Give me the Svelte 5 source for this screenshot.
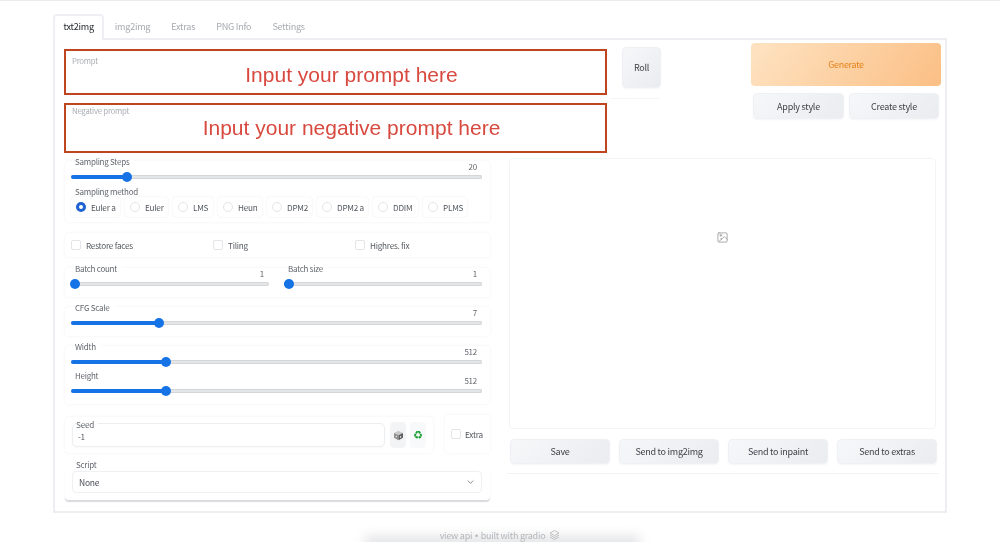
<script>
  const tabs = ['txt2img', 'img2img', 'Extras', 'PNG Info', 'Settings'];
  const methods = [
    ['Euler a', 49], ['Euler', 43], ['LMS', 40], ['Heun', 44],
    ['DPM2', 45], ['DPM2 a', 51], ['DDIM', 45], ['PLMS', 44]
  ];
  const checks = ['Restore faces', 'Tiling', 'Highres. fix'];
  const outputs = ['Save', 'Send to img2img', 'Send to inpaint', 'Send to extras'];
</script>

{#snippet slider(label, value, pct)}
  <div class="slider">
    <div class="slider-head">
      <span class="slider-label">{label}</span>
      <span class="slider-value">{value}</span>
    </div>
    <div class="track">
      <div class="fill" style="width:{pct}%"></div>
      <div class="thumb" style="left:{pct}%"></div>
    </div>
  </div>
{/snippet}

<div class="page">
  <div class="smudge"></div>
  <nav class="tabs">
    {#each tabs as tab, i}
      <span class="tab" class:active={i === 0}>{tab}</span>
    {/each}
  </nav>

  <main class="panel">
    <section class="top">
      <div class="prompts">
        <div class="prompt first">
          <span class="field-label">Prompt</span>
          <span class="note">Input your prompt here</span>
        </div>
        <div class="prompt second">
          <span class="field-label">Negative prompt</span>
          <span class="note">Input your negative prompt here</span>
        </div>
      </div>
      <div class="roll-col">
        <button class="btn roll">Roll</button>
        <div class="roll-line"></div>
      </div>
      <div class="actions">
        <button class="generate">Generate</button>
        <div class="styles">
          <button class="btn">Apply style</button>
          <button class="btn">Create style</button>
        </div>
      </div>
    </section>

    <section class="columns">
      <div class="left">
        <div class="card sampling">
          {@render slider('Sampling Steps', 20, 13.6)}
          <div class="method-label">Sampling method</div>
          <div class="radios">
            {#each methods as [name, width], i}
              <span class="radio-pill" style="width:{width}px">
                <span class="radio" class:checked={i === 0}></span>{name}
              </span>
            {/each}
          </div>
        </div>

        <div class="card checks">
          {#each checks as check}
            <span class="check"><span class="box"></span>{check}</span>
          {/each}
        </div>

        <div class="card sliders two">
          {@render slider('Batch count', 1, 2)}
          {@render slider('Batch size', 1, 2.5)}
        </div>

        <div class="card sliders">
          {@render slider('CFG Scale', 7, 21.5)}
        </div>

        <div class="card sliders">
          {@render slider('Width', 512, 23.1)}
          {@render slider('Height', 512, 23.1)}
        </div>

        <div class="seed-row">
          <div class="card seed">
            <div class="seed-input">
              <span class="seed-label">Seed</span>
              <span>-1</span>
            </div>
            <span class="icon-btn">
              <svg width="11" height="11" viewBox="0 0 16 16">
                <path d="M8 1l6.5 3.2L8 7.6 1.500 4.200z" fill="#c9c9c9"/>
                <path d="M1.500 4.200L8 7.600V15l-6.500-3.600z" fill="#8d8d8d"/>
                <path d="M14.500 4.200L8 7.600V15l6.500-3.600z" fill="#5d5d5d"/>
                <circle cx="11" cy="10" r="1.100" fill="#eee"/>
                <circle cx="4.700" cy="9.500" r="1.100" fill="#eee"/>
              </svg>
            </span>
            <span class="icon-btn recycle">♻</span>
          </div>
          <div class="card extra">
            <span class="check"><span class="box"></span>Extra</span>
          </div>
        </div>

        <div class="card script">
          <span class="script-label">Script</span>
          <div class="select">
            <span>None</span>
            <svg width="7" height="4" viewBox="0 0 10 6" fill="none" stroke="#777" stroke-width="1.300">
              <path d="M1 1l4 4 4-4"/>
            </svg>
          </div>
        </div>
      </div>

      <div class="right">
        <div class="image-box">
          <svg width="11" height="11" viewBox="0 0 24 24" fill="none" stroke="#9a9a9a" stroke-width="1.800" stroke-linecap="round" stroke-linejoin="round">
            <rect x="2" y="2" width="20" height="20" rx="2"/>
            <path d="M6 7h5M8.500 4.500v5"/>
            <path d="M5 20l11-10 6 6"/>
            <circle cx="9" cy="15" r="0.500"/>
          </svg>
        </div>
        <div class="outputs">
          {#each outputs as out}
            <button class="btn">{out}</button>
          {/each}
        </div>
        <div class="right-line"></div>
      </div>
    </section>
  </main>

  <footer class="footer">
    <span>view api <span class="dot">•</span> built with gradio</span>
    <svg width="11" height="10" viewBox="0 0 22 20" fill="none" stroke="#bbb" stroke-width="1.800">
      <path d="M11 1l9 5-9 5-9-5z"/>
      <path d="M2 10l9 5 9-5"/>
      <path d="M2 14l9 5 9-5"/>
    </svg>
  </footer>
</div>

<style>
  :global(body) {
    margin: 0;
    background: #fff;
    overflow: hidden;
  }
  .page {
    position: relative;
    width: 1000px;
    height: 542px;
    overflow: hidden;
    box-sizing: border-box;
    border-top: 1px solid #e9ebee;
    padding: 13px 53px 0;
    font-family: "Noto Sans CJK SC", "Noto Sans", sans-serif;
    font-size: 8.200px;
    letter-spacing: -0.250px;
    color: #4b4f57;
    filter: blur(0.35px);
  }
  .tabs {
    display: flex;
    height: 24px;
    position: relative;
    z-index: 1;
  }
  .tab {
    display: flex;
    align-items: center;
    padding: 0 8.500px 2px;
    color: #a8abb1;
    font-size: 9.100px;
    border: 2px solid transparent;
    border-bottom: 0;
    box-sizing: border-box;
    height: 24px;
  }
  .tab.active {
    color: #1f2329;
    background: #fff;
    border-color: #eef0f3;
    border-radius: 4px 4px 0 0;
    height: 26px;
    padding-bottom: 4px;
  }
  .panel {
    height: 475px;
    border: 2px solid #eceef1;
    box-sizing: border-box;
    padding: 3px 4px 0 9px;
  }
  .top {
    display: grid;
    grid-template-columns: 543px 39px auto;
    column-gap: 15px;
    height: 115px;
  }
  .actions {
    grid-column: 3;
    margin-left: 75px;
    width: 190px;
  }
  .prompts {
    padding-top: 6px;
  }
  .prompt {
    position: relative;
    box-sizing: border-box;
    border: 2px solid #bf4420;
    display: flex;
    align-items: center;
    justify-content: center;
    padding-left: 32px;
  }
  .prompt.first {
    height: 46px;
    padding-top: 5px;
    margin-bottom: 8px;
  }
  .prompt.second {
    height: 50px;
  }
  .field-label {
    position: absolute;
    left: 6px;
    top: 5px;
    font-size: 7.800px;
    line-height: 10px;
    color: #a9adb2;
  }
  .second .field-label {
    top: 1px;
  }
  .note {
    font-family: "Liberation Sans", Arial, sans-serif;
    font-size: 21px;
    letter-spacing: 0;
    color: #d8493f;
    white-space: nowrap;
  }
  button {
    font-family: inherit;
    letter-spacing: inherit;
    cursor: default;
  }
  .btn {
    border: 1px solid #eff0f3;
    border-radius: 4px;
    background: linear-gradient(135deg, #f6f7f9, #eaecef);
    color: #3f434a;
    font-size: 9px;
    padding: 0;
    height: 26px;
    box-shadow: 0 1px 2px rgba(0, 0, 0, 0.04);
  }
  .roll-col {
    padding-top: 4px;
  }
  .roll {
    display: block;
    width: 39px;
    height: 41px;
  }
  .roll-line {
    margin: 10px 0 0 -12px;
    width: 50px;
    height: 1px;
    background: #f4f5f6;
  }
  .generate {
    display: block;
    width: 190px;
    height: 43px;
    border: 0;
    border-radius: 4px;
    background: linear-gradient(125deg, #fee3c2, #fbbf85);
    color: #e5821a;
    font-size: 8.900px;
    padding: 0;
  }
  .styles {
    display: grid;
    grid-template-columns: 91px 90px;
    column-gap: 5px;
    margin: 7px 2px 0;
  }
  .columns {
    display: grid;
    grid-template-columns: 425px 428px;
    column-gap: 19px;
    margin-left: 1px;
  }
  .left {
    padding-top: 3px;
    display: flex;
    flex-direction: column;
  }
  .card {
    background: #fff;
    border-radius: 4px;
    box-shadow: 0 0 3px rgba(60, 70, 90, 0.07);
  }
  .sampling {
    height: 61px;
    padding: 0 8px 0 6px;
    box-sizing: border-box;
  }
  .slider {
    height: 29px;
    position: relative;
  }
  .sampling .slider,
  .sliders .slider:first-child {
    margin-top: -4px;
  }
  .slider-head {
    display: flex;
    justify-content: space-between;
    height: 15px;
    padding: 0 5px 0 4px;
    color: #62666d;
    line-height: 10px;
  }
  .slider-label {
    font-size: 8px;
    background: #fff;
    height: 10px;
    padding-right: 5px;
  }
  .slider-value {
    font-size: 8px;
    margin-top: 5px;
  }
  .track {
    position: relative;
    height: 4px;
    margin-top: 3px;
    border-radius: 2px;
    background: #e4e5e7;
    box-shadow: inset 0 0 0 1px #d5d6d8;
  }
  .fill {
    height: 100%;
    border-radius: 2px;
    background: #1673e6;
  }
  .thumb {
    position: absolute;
    top: 50%;
    width: 10px;
    height: 10px;
    border-radius: 50%;
    background: #1673e6;
    transform: translate(-50%, -50%);
  }
  .method-label {
    line-height: 10px;
    font-size: 8px;
    color: #62666d;
    margin: 1px 0 0 4px;
  }
  .radios {
    display: flex;
    gap: 5px;
    height: 20px;
  }
  .radio-pill {
    display: flex;
    align-items: center;
    gap: 5px;
    box-sizing: border-box;
    padding-left: 5px;
    white-space: nowrap;
    font-size: 8.200px;
    border-radius: 4px;
    box-shadow: 0 0 2px rgba(60, 70, 90, 0.1);
    color: #55595f;
  }
  .radio {
    flex: none;
    width: 10px;
    height: 10px;
    border: 1px solid #e3e5e8;
    border-radius: 50%;
    box-sizing: border-box;
  }
  .radio.checked {
    border: 3px solid #1f62d0;
    background: #fff;
  }
  .checks {
    margin-top: 11px;
    height: 24px;
    display: grid;
    grid-template-columns: repeat(3, 142px);
    align-items: center;
    padding-left: 6px;
    box-sizing: border-box;
  }
  .check {
    display: flex;
    align-items: center;
    gap: 5px;
    font-size: 8.200px;
    color: #55595f;
  }
  .box {
    width: 10px;
    height: 10px;
    border: 1px solid #e3e5e8;
    border-radius: 2px;
    box-sizing: border-box;
    flex: none;
  }
  .sliders {
    margin-top: 10px;
    padding: 0 8px 4px 6px;
  }
  .sliders.two {
    margin-top: 11px;
    display: grid;
    grid-template-columns: 198px 198px;
    column-gap: 15px;
  }
  .sliders.two .slider {
    margin-top: -4px;
  }
  .seed-row {
    display: grid;
    grid-template-columns: 368px 45px;
    column-gap: 12px;
    margin-top: 11px;
    height: 38px;
    align-items: end;
  }
  .seed {
    height: 36px;
    box-sizing: border-box;
    display: flex;
    align-items: center;
    padding: 0 7px;
    gap: 4px;
  }
  .seed-input {
    position: relative;
    flex: 1;
    height: 24px;
    margin-right: 1px;
    box-sizing: border-box;
    border: 1px solid #edeef0;
    border-radius: 5px;
    display: flex;
    align-items: center;
    padding-left: 5px;
    padding-top: 1px;
    font-size: 8.200px;
    color: #55595f;
    box-shadow: 0 1px 2px rgba(0, 0, 0, 0.03);
  }
  .seed-label {
    position: absolute;
    left: 3px;
    top: -5px;
    line-height: 10px;
    background: #fff;
    padding-right: 4px;
    color: #62666d;
  }
  .icon-btn {
    flex: none;
    display: flex;
    align-items: center;
    justify-content: center;
    width: 16px;
    height: 26px;
    border-radius: 4px;
    background: #f3f4f6;
  }
  .recycle {
    font-family: "DejaVu Sans", sans-serif;
    font-size: 11px;
    font-weight: 700;
    color: #0f9b2c;
    background: #f8f9fa;
  }
  .extra {
    height: 38px;
    display: flex;
    align-items: center;
    padding-left: 6px;
  }
  .extra .check {
    gap: 4px;
  }
  .script {
    position: relative;
    margin-top: 13px;
    height: 34px;
    box-sizing: border-box;
    padding: 5px 8px 0 7px;
    box-shadow: 0 2px 1px rgba(60, 70, 90, 0.2);
  }
  .script-label {
    position: absolute;
    left: 11px;
    top: -6px;
    line-height: 10px;
    font-size: 8px;
    color: #62666d;
  }
  .select {
    height: 22px;
    box-sizing: border-box;
    border: 1px solid #eff0f2;
    border-radius: 4px;
    display: flex;
    align-items: center;
    justify-content: space-between;
    padding: 0 7px 0 6px;
    font-size: 8.500px;
    color: #4b4f57;
  }
  .image-box {
    height: 271px;
    box-sizing: border-box;
    border: 1px solid #f3f4f6;
    border-radius: 4px;
    display: flex;
    align-items: center;
    justify-content: center;
    padding-bottom: 113px;
    width: 427px;
  }
  .outputs {
    display: grid;
    grid-template-columns: repeat(4, 100px);
    column-gap: 9px;
    margin: 10px 0 0 1px;
    height: 26px;
  }
  .outputs .btn {
    height: 25px;
  }
  .right-line {
    margin: 8px 0 0 -2px;
    width: 432px;
    height: 1px;
    background: #f2f3f5;
  }
  .footer {
    position: absolute;
    left: 0;
    right: 0;
    top: 528px;
    display: flex;
    align-items: center;
    justify-content: center;
    gap: 4px;
    height: 12px;
    font-size: 9px;
    color: #b4b6b9;
    z-index: 1;
  }
  .dot {
    font-family: "Liberation Sans", sans-serif;
    margin: 0 1px;
  }
  .smudge {
    position: absolute;
    left: 365px;
    top: 536px;
    width: 275px;
    height: 10px;
    background: #dcdde0;
    filter: blur(6px);
  }
</style>
